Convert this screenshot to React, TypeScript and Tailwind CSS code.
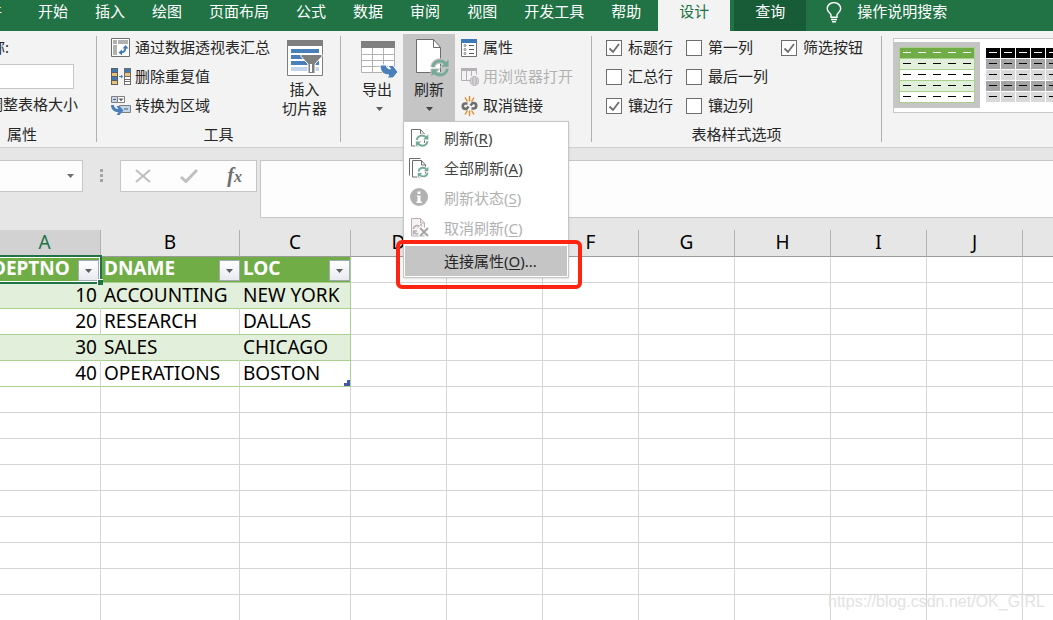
import { clsx } from 'clsx'
import { ComponentProps, ReactNode } from 'react'

const tabs = [
  '开始',
  '插入',
  '绘图',
  '页面布局',
  '公式',
  '数据',
  '审阅',
  '视图',
  '开发工具',
  '帮助',
]

const columns = ['A', 'B', 'C', 'D', 'E', 'F', 'G', 'H', 'I', 'J', '']

const fields = ['DEPTNO', 'DNAME', 'LOC']

const departments = [
  { deptno: 10, dname: 'ACCOUNTING', loc: 'NEW YORK' },
  { deptno: 20, dname: 'RESEARCH', loc: 'DALLAS' },
  { deptno: 30, dname: 'SALES', loc: 'CHICAGO' },
  { deptno: 40, dname: 'OPERATIONS', loc: 'BOSTON' },
]

const emptyRows = 9

function Caret({ className }: { className?: string }) {
  return (
    <svg viewBox="0 0 7 4" className={clsx('h-1 w-[7px]', className)}>
      <path d="M0 0h7L3.5 4z" fill="currentColor" />
    </svg>
  )
}

/* Icons */

function BulbIcon() {
  return (
    <svg
      viewBox="0 0 16 21"
      className="h-[21px] w-4"
      fill="none"
      stroke="#fff"
      strokeWidth="1.4"
    >
      <path d="M5 15.2V13C4.600 11 1.200 10 1.200 6.600a6.700 5.900 0 0 1 13.500 0C14.700 10 11.300 11 11 13v2.200z" />
      <path d="M5 17.500h6M6 19.800h4" />
    </svg>
  )
}

function PivotIcon() {
  return (
    <svg viewBox="0 0 20 20" className="size-5">
      <path d="M.5 .5h18v18H.5z" fill="#fff" stroke="#6d6d6d" />
      <path d="M2 2h4v4H2zM7 2h10v4H7zM2 7h4v10H2z" fill="#b1b1b1" />
      <path
        d="M9.500 14.500c3.500 0 5-1.500 5-5"
        fill="none"
        stroke="#3f78b5"
        strokeWidth="1.800"
      />
      <path d="M11.500 10.500 14.500 7l3 3.500zM11 11.500 7.500 14.500l3.500 3z" fill="#3f78b5" />
    </svg>
  )
}

function DuplicatesIcon() {
  return (
    <svg viewBox="0 0 20 18" className="h-[18px] w-5">
      <path d="M0 0h7v17H0z" fill="#5e5e5e" />
      <path d="M1 1h5v3H1zM1 9h5v3H1z" fill="#3f78b5" />
      <path d="M1 5h5v3H1zM1 13h5v3H1z" fill="#ecc27a" />
      <path d="M13 0h7v17h-7z" fill="#6d6d6d" />
      <path d="M14 1h5v3h-5z" fill="#3f78b5" />
      <path d="M14 5h5v3h-5z" fill="#ecc27a" />
      <path d="M14 9h5v2h-5zM14 12h5v1h-5zM14 14h5v2h-5z" fill="#fff" />
      <path d="M8 8h2V6.500L12 8.500l-2 2V9H8z" fill="#3f78b5" />
    </svg>
  )
}

function RangeIcon() {
  return (
    <svg viewBox="0 0 20 20" className="size-5">
      <path d="M.5 .5h6v6h-6z" fill="#c2d5ea" stroke="#7f7f7f" />
      <path d="M6.500 .5h7v6h-7z" fill="#fff" stroke="#7f7f7f" />
      <path d="M2 3h3v1H2z" fill="#5e5e5e" />
      <path d="M7.500 2.500h5L10 5.200z" fill="#5e5e5e" />
      <path d="M8.500 9.500h11v7h-11z" fill="#c2d5ea" stroke="#7f7f7f" />
      <path d="M13 12.500h4v1h-4z" fill="#5e5e5e" />
      <path d="M0 9h3c0 2.500 1.500 4 4.500 4L5.500 10H8.500l4 4.500-4 4.500h-3l2-2.800C3 16.200 0 13.500 0 9z" fill="#4a80ba" />
    </svg>
  )
}

function SlicerIcon() {
  return (
    <svg viewBox="0 0 36 36" className="size-9">
      <path d="M.5 .5h35v35H.5z" fill="#fff" stroke="#7f7f7f" />
      <path d="M0 0h36v6H0z" fill="#7f7f7f" />
      <path d="M4 9h28v4H4zM4 15h28v4H4zM4 21h28v4H4z" fill="#4a80ba" />
      <path d="M4 27h28v4H4z" fill="#c2d5ea" />
      <path
        d="M14 14.500h21v2L28 24v9.500h-7V24l-7-7.500z"
        fill="#7f7f7f"
        stroke="#fff"
      />
      <path d="M23 24h2v8h-2z" fill="#fff" />
    </svg>
  )
}

function ExportIcon() {
  return (
    <svg viewBox="0 0 38 38" className="size-[38px]">
      <path d="M1 2h34v31H1z" fill="#fff" />
      <path
        d="M1.500 8v24.500h33V8M1 14.500h33M1 20.500h33M1 26.500h33M12.500 8v24M23.500 8v24"
        fill="none"
        stroke="#b1b1b1"
      />
      <path d="M1 1h34v7H1z" fill="#7f7f7f" />
      <path
        d="M20 25h6c.5 2.500 2 4 4.500 4L28 25.500h5l5 6.500-5 6h-6l2-3c-6 0-9-4-9-10z"
        fill="#4a80ba"
        stroke="#fff"
      />
    </svg>
  )
}

interface RefreshArrowsProps {
  halo: string
}

function RefreshArrows({ halo }: RefreshArrowsProps) {
  const arcs =
    'M2 9C2.500 5 6 2.200 10 2.200c3 0 5 1.200 6.500 3.500M18 11c-.5 4-4 6.800-8 6.800-3 0-5-1.200-6.500-3.500'
  const heads = 'M19.500 .5v8h-8zM.5 19.500v-8h8z'

  return (
    <g fill="none">
      <path d={arcs} stroke={halo} strokeWidth="6" />
      <path d={heads} fill={halo} stroke={halo} strokeWidth="2" />
      <path d={arcs} stroke="#75aa97" strokeWidth="3.200" />
      <path d={heads} fill="#75aa97" />
    </g>
  )
}

function RefreshIcon() {
  return (
    <svg viewBox="0 0 40 40" className="size-10">
      <path d="M7.500 1.500h17l7 8v25h-24z" fill="#fff" stroke="#6d6d6d" />
      <path d="M24.500 1.500v8h7" fill="none" stroke="#6d6d6d" />
      <g transform="translate(22 21) scale(.9)">
        <RefreshArrows halo="#c5c5c5" />
      </g>
    </svg>
  )
}

function RefreshSmallIcon() {
  return (
    <svg viewBox="0 0 20 20" className="size-5">
      <path d="M1.500 1.500h9l4 4.500v12h-13z" fill="#fff" stroke="#6d6d6d" />
      <path d="M10.500 1.500V6h4" fill="none" stroke="#6d6d6d" />
      <g transform="translate(5.500 6) scale(.66)">
        <RefreshArrows halo="#fff" />
      </g>
    </svg>
  )
}

function RefreshAllIcon() {
  return (
    <svg viewBox="0 0 20 20" className="size-5 overflow-visible">
      <path d="M-.5 17.500v-17h11" fill="none" stroke="#6d6d6d" />
      <path d="M2.500 2.500h9l4 4.500v12h-13z" fill="#fff" stroke="#6d6d6d" />
      <path d="M11.500 2.500V7h4" fill="none" stroke="#6d6d6d" />
      <g transform="translate(7.500 8.500) scale(.56)">
        <RefreshArrows halo="#fff" />
      </g>
    </svg>
  )
}

function StatusIcon() {
  return (
    <svg viewBox="0 0 20 20" className="size-5">
      <circle cx="9" cy="9" r="9" fill="#b1b1b1" />
      <path d="M7.500 3.500h3v2.500h-3zM7 7.500h3.500v6H12V15H6.500v-1.500h1V9H7z" fill="#fff" />
    </svg>
  )
}

function CancelRefreshIcon() {
  return (
    <svg viewBox="0 0 20 20" className="size-5" fill="none" stroke="#b5b0b5">
      <path d="M1.500 .5h9l4 4.500v13h-13z" fill="#f6f2f6" />
      <path d="M10.500 .5V5h4" />
      <path
        d="M3.500 11c0-3 4-5 7-2M11 6v3.500H7.500M3.500 16.500V13H7M4 14c1 1.500 3 2.500 5 1.500"
        strokeWidth="1.500"
      />
      <path d="m9 9 9 9m0-9-9 9" stroke="#fff" strokeWidth="4" />
      <path d="m10 10 8 8m0-8-8 8" stroke="#a5a5a5" strokeWidth="2" />
    </svg>
  )
}

function PropertiesIcon() {
  return (
    <svg viewBox="0 0 18 18" className="size-[18px]">
      <path d="M.5 .5h15v17h-15z" fill="#fff" stroke="#6d6d6d" />
      <path d="M0 0h16v4H0z" fill="#3f78b5" />
      <path d="M8 6h5v1H8zM8 10h5v1H8zM8 14h5v1H8z" fill="#5e5e5e" />
      <g fill="none" stroke="#7f7f7f">
        <circle cx="4" cy="6.500" r="1" />
        <circle cx="4" cy="10.500" r="1" />
        <circle cx="4" cy="14.500" r="1" />
      </g>
    </svg>
  )
}

function BrowserIcon() {
  return (
    <svg viewBox="0 0 18 18" className="size-[18px]" fill="none" stroke="#b5b0b5">
      <path d="M.5 2.500v10h9M15.500 2.500v4M5.500 3v9M10.500 3v5" />
      <path d="M0 0h16v3H0z" fill="#b5b0b5" stroke="none" />
      <circle cx="13.500" cy="13" r="4.400" fill="#f3f3f3" />
      <ellipse cx="13.500" cy="13" rx="1.800" ry="4.400" />
      <path d="M9 13h9M10 11h7M10 15h7" />
    </svg>
  )
}

function UnlinkIcon() {
  return (
    <svg viewBox="0 0 18 20" className="h-5 w-[18px]" fill="none">
      <path
        d="M8.500 0v5.500M4 1.500 6.500 5.500M13 1.500l-2.500 4M8.500 20v-5.500M4 18.500l2.500-4M13 18.500l-2.500-4"
        stroke="#e8801f"
        strokeWidth="1.300"
      />
      <path
        d="M6.500 7.500H4.500a2.700 2.700 0 0 0 0 5.400H6M11 7h1.500a2.700 2.700 0 0 1 0 5.500H10.500M5 13.500l2.500-3M9.500 9.500l2.500-3"
        stroke="#6d6d6d"
        strokeWidth="2.600"
      />
    </svg>
  )
}

/* Ribbon */

interface RibbonGroupProps {
  label?: string
  className?: string
  children: ReactNode
}

function RibbonGroup({ label, className, children }: RibbonGroupProps) {
  return (
    <>
      <section className={clsx('shrink-0 pt-0.5', className)}>
        <div className="flex h-[87px]">{children}</div>
        {label && <h2 className="text-center leading-7">{label}</h2>}
      </section>
      <div className="my-[5px] w-px shrink-0 bg-[#b1b1b1]" />
    </>
  )
}

interface SmallButtonProps extends ComponentProps<'button'> {
  icon: ReactNode
}

function SmallButton({ icon, children, ...props }: SmallButtonProps) {
  return (
    <button
      type="button"
      className="flex h-[29px] items-center gap-1 whitespace-nowrap disabled:text-[#b1b1b1]"
      {...props}
    >
      {icon}
      {children}
    </button>
  )
}

interface StyleOptionProps {
  label: string
  checked?: boolean
}

function StyleOption({ label, checked }: StyleOptionProps) {
  return (
    <label className="flex h-[29px] items-center gap-1.5 whitespace-nowrap">
      <span className="grid">
        <input
          type="checkbox"
          defaultChecked={checked}
          className="peer col-start-1 row-start-1 size-4 appearance-none border border-[#6d6d6d] bg-white"
        />
        <svg
          viewBox="0 0 16 16"
          className="pointer-events-none invisible col-start-1 row-start-1 size-4 peer-checked:visible"
        >
          <path
            d="m3.500 8.500 3.500 3.500 6-8"
            fill="none"
            stroke="#6d6d6d"
            strokeWidth="1.800"
          />
        </svg>
      </span>
      {label}
    </label>
  )
}

interface MenuItemProps extends ComponentProps<'button'> {
  icon?: ReactNode
  label: string
  hotkey: string
  suffix?: string
}

function MenuItem({
  icon,
  label,
  hotkey,
  suffix,
  className,
  ...props
}: MenuItemProps) {
  return (
    <button
      type="button"
      role="menuitem"
      className={clsx(
        'flex h-[30px] w-full items-center gap-3.5 pl-[5px] disabled:text-[#b1b1b1]',
        className,
      )}
      {...props}
    >
      <span className="size-5">{icon}</span>
      <span>
        {label}(<u className="underline-offset-2">{hotkey}</u>){suffix}
      </span>
    </button>
  )
}

function RefreshMenu() {
  return (
    <div
      role="menu"
      className="absolute top-[87px] left-0 w-[166px] border border-[#c6c6c6] bg-white p-px text-[#444] shadow-sm"
    >
      <MenuItem icon={<RefreshSmallIcon />} label="刷新" hotkey="R" />
      <MenuItem icon={<RefreshAllIcon />} label="全部刷新" hotkey="A" />
      <MenuItem icon={<StatusIcon />} label="刷新状态" hotkey="S" disabled />
      <MenuItem
        icon={<CancelRefreshIcon />}
        label="取消刷新"
        hotkey="C"
        disabled
      />
      <div className="relative mt-[3px]">
        <MenuItem
          label="连接属性"
          hotkey="O"
          suffix="..."
          className="bg-[#c5c5c5] text-[#262626]"
        />
        <div className="pointer-events-none absolute -top-1.5 -right-[15px] -bottom-[13px] -left-[9px] rounded-md border-4 border-[#ff2412]" />
      </div>
    </div>
  )
}

function StyleGallery() {
  const cells = [0, 1, 2, 3, 4]
  const greens = ['#70ad47', '#e2efda', '#fff', '#e2efda', '#fff']
  const greys = ['#000', '#a5a5a5', '#d9d9d9', '#a5a5a5', '#d9d9d9']

  return (
    <div className="mt-[7px] ml-[11px] flex h-[75px] flex-1 items-start overflow-hidden border border-r-0 border-[#c8c8c8] bg-white pt-[3px]">
      <button
        type="button"
        aria-label="绿色"
        className="shrink-0 bg-[#c5c5c5] p-[5px]"
      >
        <svg viewBox="0 0 76 56" className="h-14 w-[76px]">
          <path d="M0 0h76v56H0z" fill="#a9d08e" />
          {greens.map((fill, row) => (
            <rect key={row} x="1" y={row * 11 + 1} width="74" height="10" fill={fill} />
          ))}
          {greens.map((_, row) =>
            cells.map((cell) => (
              <rect
                key={`${row}-${cell}`}
                x={cell * 15 + 4}
                y={row * 11 + 5}
                width="8"
                height="1"
                fill={row === 0 ? '#fff' : '#000'}
              />
            )),
          )}
        </svg>
      </button>
      <button type="button" aria-label="黑色" className="shrink-0 p-[5px]">
        <svg viewBox="0 0 76 56" className="h-14 w-[76px]">
          {greys.map((fill, row) =>
            cells.map((cell) => (
              <g key={`${row}-${cell}`}>
                <rect
                  x={cell * 15 + 1}
                  y={row * 11 + 1}
                  width="14"
                  height="10"
                  fill={fill}
                />
                <rect
                  x={cell * 15 + 4}
                  y={row * 11 + 5}
                  width="8"
                  height="1"
                  fill={row === 0 ? '#fff' : '#000'}
                />
              </g>
            )),
          )}
        </svg>
      </button>
    </div>
  )
}

function TabBar() {
  return (
    <nav className="-ml-7 flex h-[31px] items-stretch overflow-hidden bg-[#217346] whitespace-nowrap text-white">
      <button type="button" className="mr-[22px] pb-2.5">
        文件
      </button>
      {tabs.map((tab) => (
        <button key={tab} type="button" className="mr-[-1px] px-3.5 pb-2.5">
          {tab}
        </button>
      ))}
      <button
        type="button"
        className="mr-1 ml-1 bg-[#f3f3f3] px-[21px] pb-2.5 text-[#217346]"
      >
        设计
      </button>
      <button type="button" className="bg-[#185c37] px-[21px] pb-2.5">
        查询
      </button>
      <button type="button" className="ml-5 flex gap-[15px]">
        <span className="pt-0.5">
          <BulbIcon />
        </span>
        操作说明搜索
      </button>
    </nav>
  )
}

function Ribbon() {
  return (
    <div className="relative z-10 -ml-[52px] flex h-[117px] border-b border-[#d0d0d0] bg-[#f3f3f3]">
      <RibbonGroup label="属性" className="w-[148px]">
        <div className="flex flex-col pl-3">
          <label htmlFor="table-name" className="leading-[29px]">
            表名称:
          </label>
          <input
            id="table-name"
            className="mt-0.5 h-[26px] w-[114px] border border-[#c6c6c6] bg-white px-1"
          />
          <button
            type="button"
            className="h-8 pl-7 text-left whitespace-nowrap"
          >
            调整表格大小
          </button>
        </div>
      </RibbonGroup>

      <RibbonGroup label="工具" className="w-[243px]">
        <div className="pl-3.5">
          <SmallButton icon={<PivotIcon />}>通过数据透视表汇总</SmallButton>
          <SmallButton icon={<DuplicatesIcon />}>删除重复值</SmallButton>
          <SmallButton icon={<RangeIcon />}>转换为区域</SmallButton>
        </div>
        <button
          type="button"
          className="ml-3 flex flex-col items-center pt-[7px] leading-[19px]"
        >
          <SlicerIcon />
          <span className="pt-1">
            插入
            <br />
            切片器
          </span>
        </button>
      </RibbonGroup>

      <RibbonGroup className="w-[250px]">
        <button
          type="button"
          className="ml-2.5 flex w-[52px] flex-col items-center pt-[7px] pl-1"
        >
          <ExportIcon />
          <span className="pr-1 leading-[23px]">导出</span>
          <Caret className="mt-1.5 text-[#5e5e5e]" />
        </button>
        <div className="relative mt-px">
          <button
            type="button"
            aria-haspopup="menu"
            aria-expanded="true"
            className="flex h-[87px] w-[52px] flex-col items-center bg-[#c5c5c5] pt-1"
          >
            <RefreshIcon />
            <span className="leading-[23px]">刷新</span>
            <Caret className="mt-1.5 text-[#444]" />
          </button>
          <RefreshMenu />
        </div>
        <div className="pl-1.5">
          <SmallButton icon={<PropertiesIcon />}>属性</SmallButton>
          <SmallButton icon={<BrowserIcon />} disabled>
            用浏览器打开
          </SmallButton>
          <SmallButton icon={<UnlinkIcon />}>取消链接</SmallButton>
        </div>
      </RibbonGroup>

      <RibbonGroup label="表格样式选项" className="w-[289px]">
        <div className="flex gap-[13px] pl-3.5">
          <div>
            <StyleOption label="标题行" checked />
            <StyleOption label="汇总行" />
            <StyleOption label="镶边行" checked />
          </div>
          <div>
            <StyleOption label="第一列" />
            <StyleOption label="最后一列" />
            <StyleOption label="镶边列" />
          </div>
          <div>
            <StyleOption label="筛选按钮" checked />
          </div>
        </div>
      </RibbonGroup>

      <StyleGallery />
    </div>
  )
}

function FormulaBar() {
  return (
    <div className="flex h-[82px] items-start pt-3">
      <div className="-ml-px flex h-8 w-[84px] items-center border border-[#c6c6c6] bg-[#fdfdfd]">
        <input aria-label="名称框" className="h-full min-w-0 flex-1 px-1" />
        <button type="button" aria-label="名称列表" className="px-2">
          <Caret className="text-[#6d6d6d]" />
        </button>
      </div>
      <svg viewBox="0 0 3 13" className="mt-[9px] ml-[17px] h-[13px] w-[3px]">
        <path d="M0 0h3v3H0zM0 5h3v3H0zM0 10h3v3H0z" fill="#a5a5a5" />
      </svg>
      <div className="ml-[17px] flex h-8 w-[137px] items-center justify-between border border-[#c6c6c6] bg-[#fdfdfd] px-3.5">
        <button type="button" aria-label="取消">
          <svg viewBox="0 0 16 14" className="h-3.5 w-4">
            <path
              d="m1 1 14 12M15 1 1 13"
              stroke="#c0c0c0"
              strokeWidth="2.200"
            />
          </svg>
        </button>
        <button type="button" aria-label="输入">
          <svg viewBox="0 0 18 14" className="h-3.5 w-[18px]">
            <path
              d="m1 8 5 4.500L17 1"
              fill="none"
              stroke="#c0c0c0"
              strokeWidth="3"
            />
          </svg>
        </button>
        <button
          type="button"
          aria-label="插入函数"
          className="font-['Liberation_Serif',serif] text-xl leading-6 font-bold text-[#6d6d6d] italic"
        >
          f<span className="text-base">x</span>
        </button>
      </div>
      <input
        aria-label="编辑栏"
        className="ml-[3px] h-[58px] min-w-0 flex-1 border border-r-0 border-[#c6c6c6] bg-[#fdfdfd] px-2"
      />
    </div>
  )
}

/* Sheet */

function FieldHeader({ name, selected }: { name: string; selected?: boolean }) {
  return (
    <th className="relative border-b border-[#a9d08e] bg-[#70ad47] p-0 text-left align-top font-bold text-white last-of-type:border-r">
      <div
        className={clsx(
          'flex h-[25px] items-start justify-between pl-[3px]',
          selected ? 'pr-[2px]' : 'pr-px in-last-of-type:pr-0',
        )}
      >
        <span className="leading-[23px]">{name}</span>
        <button
          type="button"
          aria-label={`筛选 ${name}`}
          className="relative z-[1] mt-[3px] grid h-[21px] w-[21px] place-items-center border border-[#a5a9b5] bg-linear-to-b from-white to-[#e8eaf0] text-[#5e5e5e]"
        >
          <Caret />
        </button>
      </div>
      {selected && (
        <div className="pointer-events-none absolute -top-0.5 -right-px -bottom-0.5 left-0 z-[2] border-2 border-[#217346] shadow-[inset_0_0_0_1px_white]">
          <div className="absolute -right-[3px] -bottom-[3px] size-1.5 border-t border-l border-white bg-[#217346]" />
        </div>
      )}
    </th>
  )
}

function EmptyCells({ count }: { count: number }) {
  return Array.from({ length: count }, (_, index) => (
    <td
      key={index}
      className="border-r border-b border-[#d4d4d4] p-0 last:border-r-0"
    />
  ))
}

function Sheet() {
  return (
    <table className="-ml-[11px] w-[calc(100%+11px)] table-fixed border-separate border-spacing-0 font-['Noto_Sans','Noto_Sans_CJK_SC',sans-serif] text-[19px] text-black">
      <colgroup>
        <col className="w-28" />
        <col className="w-[139px]" />
        <col className="w-[111px]" />
        {columns.slice(3, 10).map((column) => (
          <col key={column} className="w-24" />
        ))}
        <col />
      </colgroup>
      <thead>
        <tr className="h-[27px]">
          {columns.map((column, index) => (
            <th
              key={index}
              className={clsx(
                'border-r border-b border-r-[#b1b1b1] border-b-[#9b9b9b] p-0 align-top leading-6 font-normal last:border-r-0',
                index === 0 ? 'bg-[#d2d2d2] text-[#217346]' : 'bg-[#e6e6e6]',
              )}
            >
              {column}
            </th>
          ))}
        </tr>
      </thead>
      <tbody>
        <tr className="h-[26px]">
          {fields.map((field, index) => (
            <FieldHeader key={field} name={field} selected={index === 0} />
          ))}
          <EmptyCells count={8} />
        </tr>
        {departments.map(({ deptno, dname, loc }, index) => {
          const banded = index % 2 === 0
          const cell = clsx(
            'border-r border-b border-b-[#a9d08e] px-[3px] py-0 align-top leading-6',
            banded
              ? 'border-r-[#e2efda] bg-[#e2efda]'
              : 'border-r-[#d4d4d4] bg-white',
          )

          return (
            <tr key={deptno} className="h-[26px]">
              <td className={clsx(cell, 'text-right')}>{deptno}</td>
              <td className={cell}>{dname}</td>
              <td
                className={clsx(
                  'relative border-r border-b border-[#a9d08e] px-[3px] py-0 align-top leading-6 whitespace-nowrap',
                  banded ? 'bg-[#e2efda]' : 'bg-white',
                )}
              >
                {loc}
                {index === departments.length - 1 && (
                  <svg
                    viewBox="0 0 6 6"
                    className="absolute right-0 bottom-0 size-1.5"
                  >
                    <path d="M3 0h3v6H0V3h3z" fill="#4458a8" />
                  </svg>
                )}
              </td>
              <EmptyCells count={8} />
            </tr>
          )
        })}
        {Array.from({ length: emptyRows }, (_, index) => (
          <tr key={index} className="h-[26px]">
            <EmptyCells count={11} />
          </tr>
        ))}
      </tbody>
    </table>
  )
}

export default function App() {
  return (
    <div className="relative h-screen overflow-hidden bg-white font-['Noto_Sans','Noto_Sans_CJK_SC',sans-serif] text-[15px] text-[#262626]">
      <TabBar />
      <Ribbon />
      <div className="bg-[#e6e6e6]">
        <FormulaBar />
      </div>
      <Sheet />
      <p className="absolute right-2 bottom-1.5 font-['Liberation_Sans',sans-serif] text-base text-[#e2e2e2]">
        https://blog.csdn.net/OK_GIRL
      </p>
    </div>
  )
}
